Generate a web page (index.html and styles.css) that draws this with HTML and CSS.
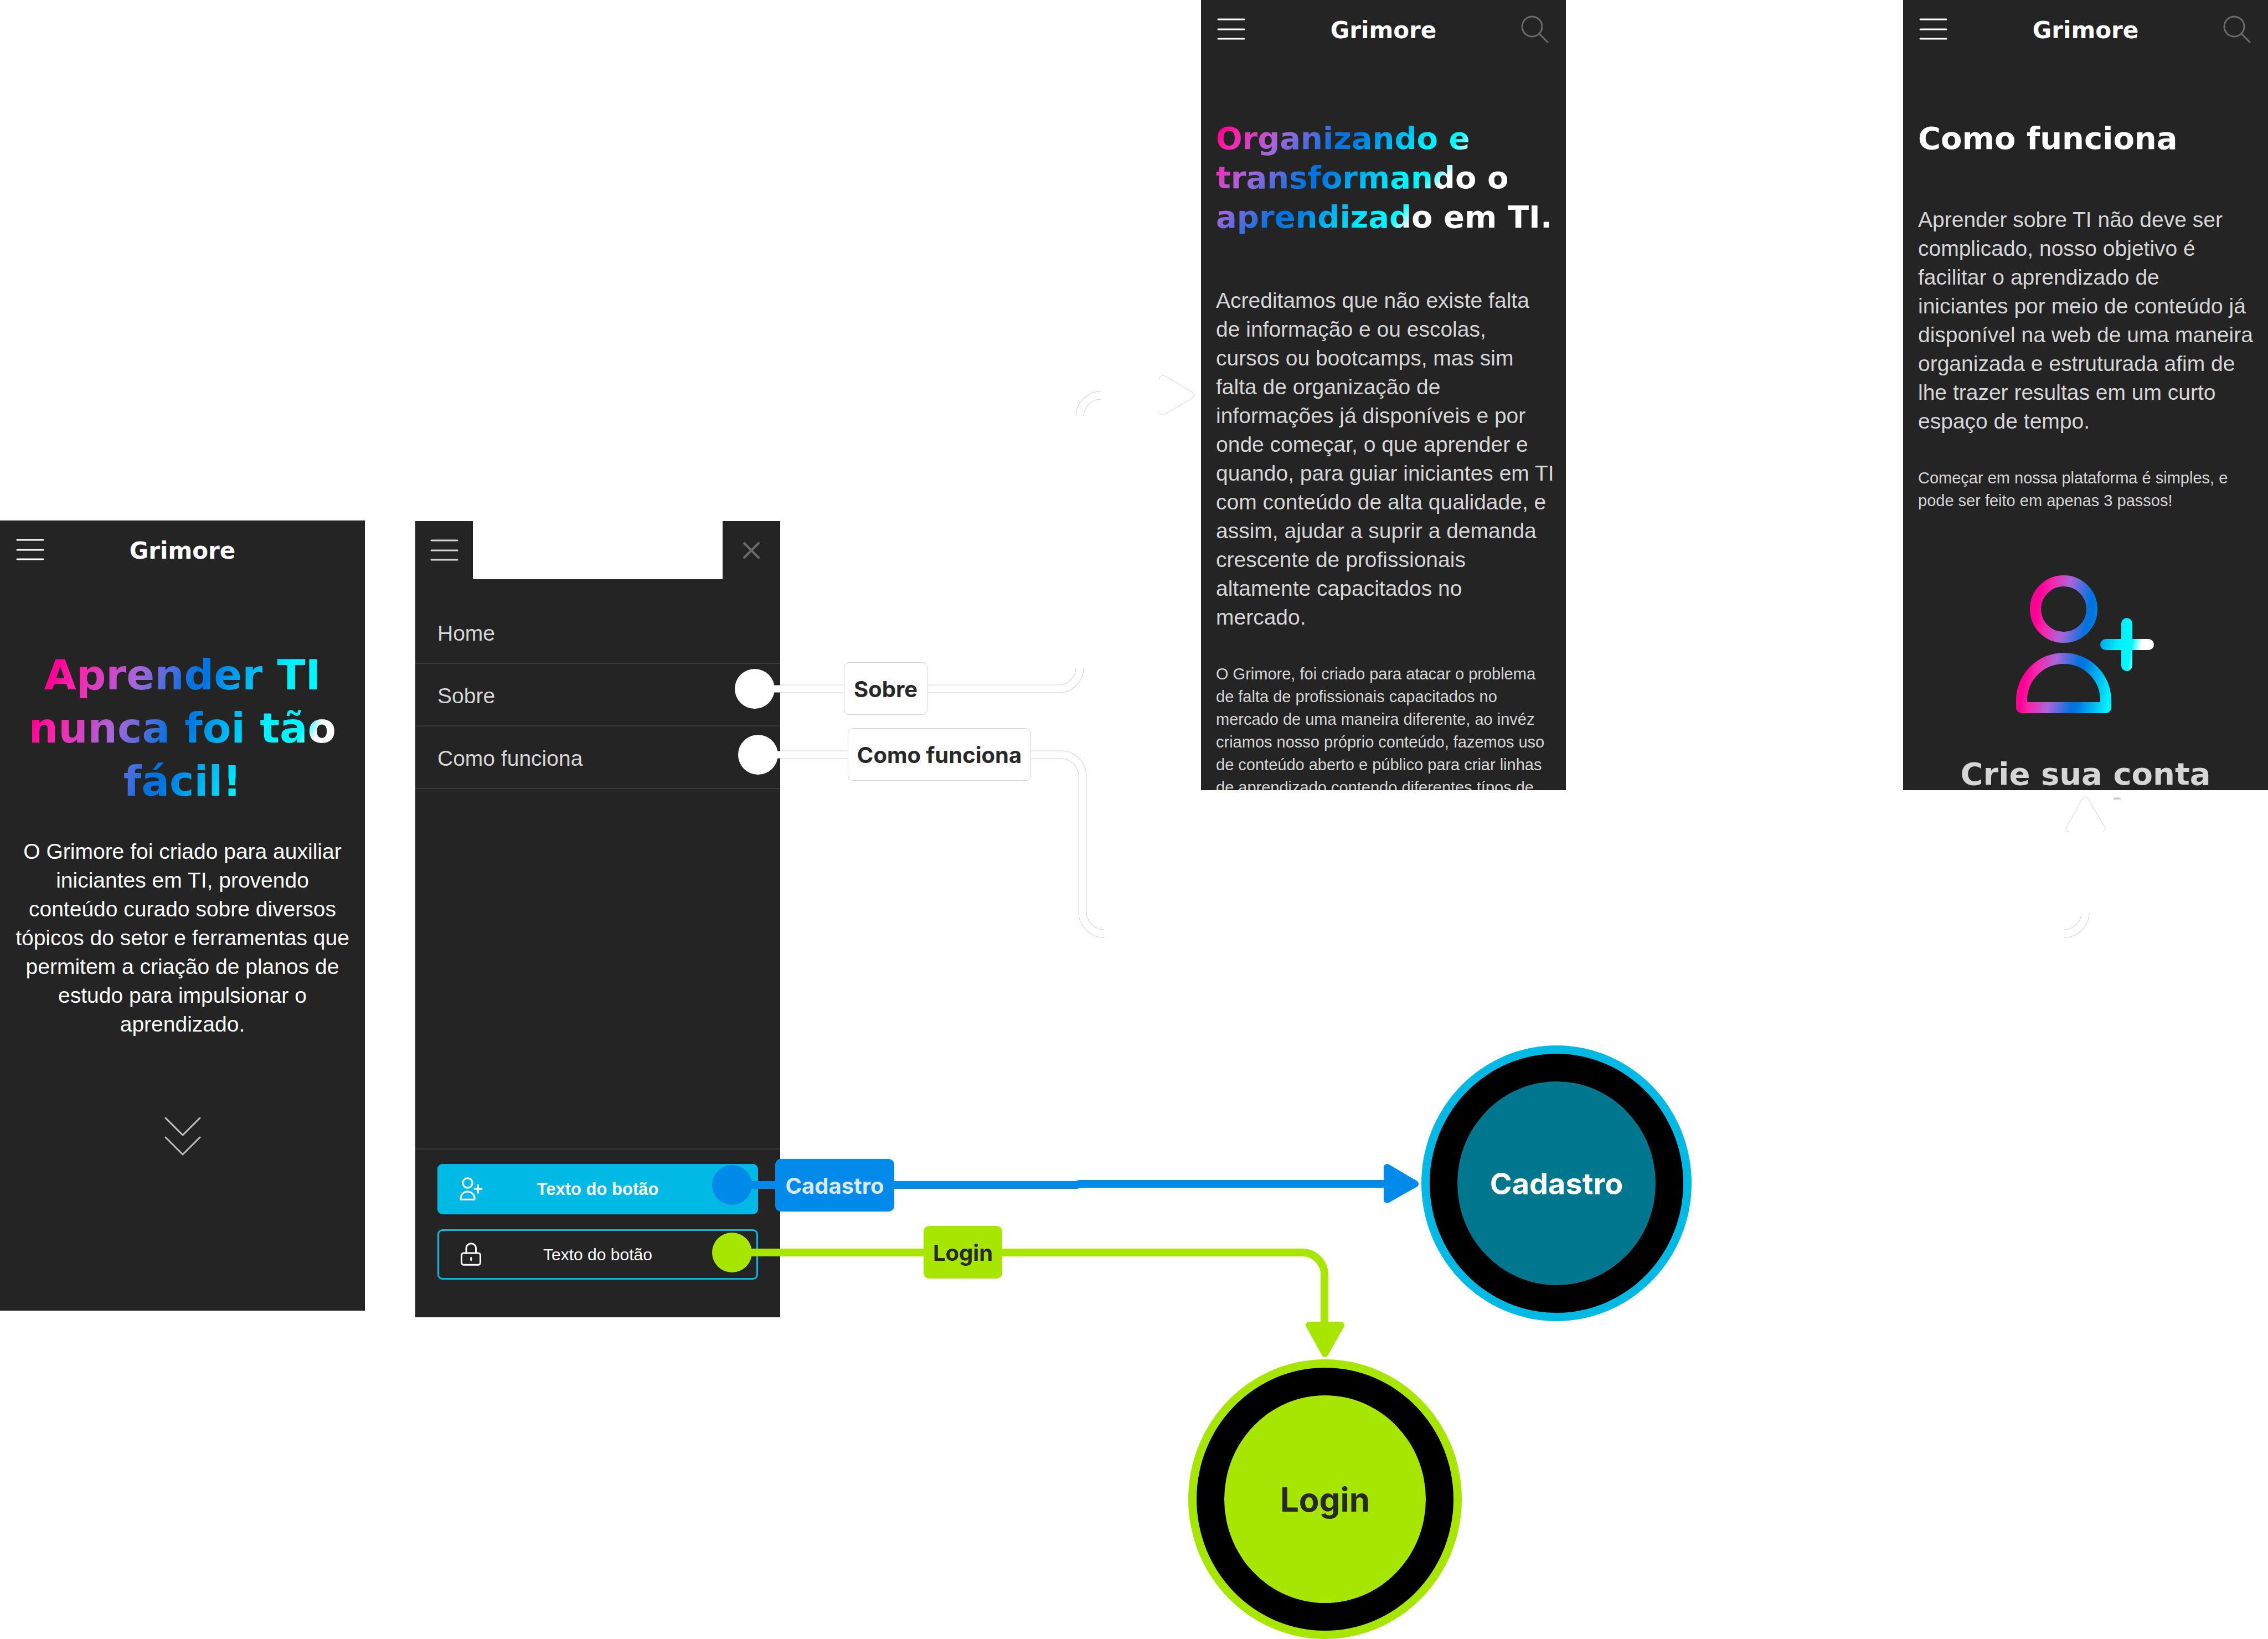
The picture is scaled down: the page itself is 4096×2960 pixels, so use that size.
FILE: index.html
```html
<!DOCTYPE html>
<html lang="pt-BR">
<head>
<meta charset="utf-8">
<meta name="viewport" content="width=device-width, initial-scale=1">
<title>Grimore - Fluxo mobile</title>
<link rel="stylesheet" href="styles.css">
</head>
<body>
<main class="canvas">

  <section class="phone phone-home">
    <header class="bar">
      <button class="icon-button" type="button" aria-label="Abrir menu">
        <svg class="icon-menu" viewBox="0 0 51 39"><path d="M2 2H49M2 20H49M2 37H49"/></svg>
      </button>
      <span class="brand">Grimore</span>
      <span class="bar-spacer"></span>
    </header>
    <div class="hero">
      <h1 class="hero-title">Aprender TI<br>nunca foi tão<br>fácil!</h1>
      <p class="text hero-text">O Grimore foi criado para auxiliar<br>iniciantes em TI, provendo<br>conteúdo curado sobre diversos<br>tópicos do setor e ferramentas que<br>permitem a criação de planos de<br>estudo para impulsionar o<br>aprendizado.</p>
      <svg class="icon-scroll" viewBox="0 0 66 70"><path d="M2 2L33 33L64 2M2 37L33 68L64 37"/></svg>
    </div>
  </section>

  <section class="phone-menu">
    <header class="menu-bar">
      <button class="menu-tab" type="button" aria-label="Menu">
        <svg class="icon-menu" viewBox="0 0 51 39"><path d="M2 2H49M2 20H49M2 37H49"/></svg>
      </button>
      <button class="menu-tab menu-tab-close" type="button" aria-label="Fechar menu">
        <svg class="icon-close" viewBox="0 0 32 32"><path d="M3 3L29 29M29 3L3 29"/></svg>
      </button>
    </header>
    <div class="menu-body">
      <nav class="menu-list">
        <a class="menu-link" href="#home">Home</a>
        <a class="menu-link" href="#sobre">Sobre</a>
        <a class="menu-link" href="#como-funciona">Como funciona</a>
      </nav>
      <div class="menu-actions">
        <button class="action action-primary" type="button">
          <svg class="action-icon" viewBox="0 0 42 42"><circle cx="14.500" cy="10.500" r="8.700"/><path d="M2 40.200V38.500A12.500 12.500 0 0 1 27 38.500V40.200ZM27 21.300H40M33.500 14.500V28"/></svg>
          Texto do botão
        </button>
        <button class="action" type="button">
          <svg class="action-icon" viewBox="0 0 42 42"><rect x="3.500" y="19" width="34" height="21.300" rx="4"/><path d="M12 19V10.500A8.700 8.700 0 0 1 29.500 10.500V19M20.700 27.500V31.500"/></svg>
          Texto do botão
        </button>
      </div>
    </div>
  </section>

  <section class="phone phone-about" id="sobre">
    <header class="bar">
      <button class="icon-button" type="button" aria-label="Abrir menu">
        <svg class="icon-menu" viewBox="0 0 51 39"><path d="M2 2H49M2 20H49M2 37H49"/></svg>
      </button>
      <span class="brand">Grimore</span>
      <button class="icon-button" type="button" aria-label="Buscar">
        <svg class="icon-search" viewBox="0 0 50 50"><circle cx="20" cy="20" r="18"/><path d="M33 33L48 48"/></svg>
      </button>
    </header>
    <article class="page">
      <h2 class="title title-gradient">Organizando e<br>transformando o<br>aprendizado em TI.</h2>
      <p class="text about-text">Acreditamos que não existe falta<br>de informação e ou escolas,<br>cursos ou bootcamps, mas sim<br>falta de organização de<br>informações já disponíveis e por<br>onde começar, o que aprender e<br>quando, para guiar iniciantes em TI<br>com conteúdo de alta qualidade, e<br>assim, ajudar a suprir a demanda<br>crescente de profissionais<br>altamente capacitados no<br>mercado.</p>
      <p class="text-small">O Grimore, foi criado para atacar o problema<br>de falta de profissionais capacitados no<br>mercado de uma maneira diferente, ao invéz<br>criamos nosso próprio conteúdo, fazemos uso<br>de conteúdo aberto e público para criar linhas<br>de aprendizado contendo diferentes típos de</p>
    </article>
  </section>

  <section class="phone phone-how" id="como-funciona">
    <header class="bar">
      <button class="icon-button" type="button" aria-label="Abrir menu">
        <svg class="icon-menu" viewBox="0 0 51 39"><path d="M2 2H49M2 20H49M2 37H49"/></svg>
      </button>
      <span class="brand">Grimore</span>
      <button class="icon-button" type="button" aria-label="Buscar">
        <svg class="icon-search" viewBox="0 0 50 50"><circle cx="20" cy="20" r="18"/><path d="M33 33L48 48"/></svg>
      </button>
    </header>
    <article class="page">
      <h2 class="title">Como funciona</h2>
      <p class="text how-text">Aprender sobre TI não deve ser<br>complicado, nosso objetivo é<br>facilitar o aprendizado de<br>iniciantes por meio de conteúdo já<br>disponível na web de uma maneira<br>organizada e estruturada afim de<br>lhe trazer resultas em um curto<br>espaço de tempo.</p>
      <p class="text-small">Começar em nossa plataforma é simples, e<br>pode ser feito em apenas 3 passos!</p>
      <svg class="icon-signup" viewBox="0 0 250 250">
        <defs>
          <linearGradient id="rainbow" gradientUnits="userSpaceOnUse" x1="0" y1="0" x2="295" y2="54">
            <stop offset="0.16" stop-color="#ff0095"/>
            <stop offset="0.21" stop-color="#ff1fa7"/>
            <stop offset="0.33" stop-color="#a866da"/>
            <stop offset="0.47" stop-color="#0073df"/>
            <stop offset="0.50" stop-color="#0076e0"/>
            <stop offset="0.68" stop-color="#00f0ff"/>
            <stop offset="0.76" stop-color="#00f8ff"/>
            <stop offset="0.82" stop-color="#fff"/>
          </linearGradient>
        </defs>
        <circle cx="86" cy="61" r="51"/>
        <path d="M10 239V226A76 76 0 0 1 162 226V239Z"/>
        <path d="M162 125H239M200 87V163"/>
      </svg>
      <h3 class="title step-title">Crie sua conta</h3>
    </article>
  </section>

  <svg class="wires" aria-hidden="true">
    <g class="wire-edge">
      <path d="M1409 1244H1912A38 38 0 0 0 1950 1206"/>
      <path d="M1950 752A38 38 0 0 1 1988 714"/>
      <path d="M1409 1363H1916A39 39 0 0 1 1955 1402V1647A39 39 0 0 0 1994 1686"/>
      <path d="M3766 1648A38 38 0 0 1 3728 1686"/>
    </g>
    <g class="wire-white">
      <path d="M1390 1244H1912A38 38 0 0 0 1950 1206V1204"/>
      <path d="M1950 754V752A38 38 0 0 1 1988 714H1990"/>
      <path d="M1390 1363H1916A39 39 0 0 1 1955 1402V1647A39 39 0 0 0 1994 1686H1996"/>
      <path d="M3766 1646V1648A38 38 0 0 1 3728 1686H3726"/>
    </g>
    <circle class="dot-white" cx="1363" cy="1244" r="36"/>
    <circle class="dot-white" cx="1369" cy="1363" r="36"/>
    <path class="tip-outline" d="M2094 684C2094 679 2100 677 2104 679L2153 708Q2160 713 2153 719L2104 748C2100 751 2094 748 2094 743"/>
    <path class="tip-outline" d="M3736 1502C3731 1501 3730 1497 3732 1494L3761 1442Q3766 1436 3771 1442L3801 1494C3803 1497 3801 1501 3797 1502"/>
    <path class="sliver" d="M3817 1444V1441Q3823 1439 3830 1441V1444Z"/>
    <g class="wire wire-blue">
      <path d="M1350 2140H1945L1949 2138H2505"/>
      <path class="tip" d="M2505 2108V2167L2556 2138Z"/>
    </g>
    <circle class="dot-blue" cx="1322" cy="2140" r="36"/>
    <g class="wire wire-green">
      <path d="M1350 2262H2352A40 40 0 0 1 2392 2302V2396"/>
      <path class="tip" d="M2364 2393H2422L2393 2445Z"/>
    </g>
    <circle class="dot-green" cx="1322" cy="2262" r="36"/>
  </svg>

  <div class="tag tag-sobre">Sobre</div>
  <div class="tag tag-como">Como funciona</div>
  <div class="tag tag-cadastro">Cadastro</div>
  <div class="tag tag-login">Login</div>

  <div class="node node-cadastro"><span class="node-core">Cadastro</span></div>
  <div class="node node-login"><span class="node-core">Login</span></div>
</main>
</body>
</html>
```

FILE: styles.css
```css
* {
  box-sizing: border-box;
}

body {
  margin: 0;
  background: #fff;
  color: #d6d6d6;
  font-family: "Liberation Sans", Arial, sans-serif;
}

h1, h2, h3, p {
  margin: 0;
}

button {
  margin: 0;
  padding: 0;
  border: 0;
  background: none;
  color: inherit;
  font: inherit;
}

svg {
  display: block;
  fill: none;
  stroke: currentColor;
  stroke-linecap: round;
  stroke-linejoin: round;
}

.canvas {
  position: relative;
  width: 100%;
  min-height: 100vh;
  overflow: hidden;
}

/* Phone frames, placed freely on the canvas */
.phone {
  position: absolute;
  width: 659px;
  height: 1427px;
  overflow: hidden;
  background: #242424;
  white-space: nowrap;
}

.phone-home { left: 0; top: 940px; }
.phone-about { left: 2169px; top: 0; }
.phone-how { right: 0; top: 0; }

.bar {
  display: flex;
  align-items: center;
  justify-content: space-between;
  height: 105px;
  padding: 0 29px;
  color: #fff;
}

.icon-button,
.bar-spacer {
  width: 52px;
}

.brand {
  padding-top: 4px;
  font: 700 42px/56px "DejaVu Sans", sans-serif;
}

.icon-menu {
  width: 51px;
  height: 39px;
  stroke-width: 3;
}

.icon-search {
  width: 50px;
  height: 50px;
  color: #6b6b6b;
  stroke-width: 3;
}

.text {
  font-size: 39px;
  line-height: 52px;
}

.text-small {
  font-size: 29px;
  line-height: 41px;
}

/* Home */
.hero {
  display: flex;
  flex-direction: column;
  align-items: center;
  padding: 126px 27px 0;
  color: #fff;
  text-align: center;
}

.hero-title {
  align-self: stretch;
  font: 700 75px/96px "DejaVu Sans", sans-serif;
  background: linear-gradient(113deg, #ff0095 12%, #ff1fa7 17%, #a866da 33%, #0073df 48%, #0076e0 51%, #00f0ff 70%, #00f8ff 80%, #fff 84%);
  -webkit-background-clip: text;
  background-clip: text;
  color: transparent;
}

.hero-text {
  margin-top: 53px;
}

.icon-scroll {
  width: 66px;
  height: 70px;
  margin-top: 141px;
  color: #bfbfbf;
  stroke-width: 3;
}

/* Content pages */
.page {
  padding: 109px 27px 0;
}

.title {
  color: #fff;
  font: 700 56px/71px "DejaVu Sans", sans-serif;
}

.title-gradient {
  background: linear-gradient(129deg, #ff0095 3%, #ff1fa7 7%, #a866da 18%, #0073df 33%, #0076e0 36%, #00f0ff 54%, #00f8ff 60%, #fff 65%);
  -webkit-background-clip: text;
  background-clip: text;
  color: transparent;
}

.about-text { margin-top: 90px; }
.how-text { margin-top: 86px; }

.text + .text-small {
  margin-top: 56px;
}

.icon-signup {
  width: 250px;
  height: 250px;
  margin: 114px 0 73px 177px;
  stroke: url(#rainbow);
  stroke-width: 20;
}

.step-title {
  color: #d6d6d6;
  text-align: center;
}

/* Open menu */
.phone-menu {
  position: absolute;
  left: 750px;
  top: 941px;
  width: 659px;
}

.menu-bar {
  display: flex;
  justify-content: space-between;
}

.menu-tab {
  display: grid;
  place-items: center;
  width: 104px;
  height: 105px;
  background: #242424;
}

.menu-tab-close {
  color: #6b6b6b;
}

.icon-close {
  width: 32px;
  height: 32px;
  stroke-width: 4;
}

.menu-body {
  display: flex;
  flex-direction: column;
  justify-content: space-between;
  min-height: 1333px;
  padding-top: 40px;
  background: #242424;
}

.menu-link {
  display: block;
  padding: 4px 40px 0;
  border-bottom: 2px solid #3a3a3a;
  color: #d6d6d6;
  font-size: 39px;
  line-height: 107px;
  text-decoration: none;
}

.menu-actions {
  display: flex;
  flex-direction: column;
  gap: 27px;
  padding: 26px 40px 68px;
  border-top: 2px solid #3a3a3a;
}

.action {
  position: relative;
  height: 91px;
  border: 3px solid #00b9e5;
  border-radius: 9px;
  color: #fff;
  font-size: 30px;
  line-height: 36px;
}

.action-primary {
  background: #00b9e5;
  font-size: 31px;
  font-weight: 700;
}

.action-icon {
  position: absolute;
  left: 37px;
  top: 21px;
  width: 42px;
  height: 42px;
  stroke-width: 3;
}

/* Connectors */
.wires {
  position: absolute;
  left: 0;
  top: 0;
  width: 100%;
  height: 100%;
  stroke-linecap: butt;
  pointer-events: none;
}

.wire-edge { stroke: #d4d4d4; stroke-width: 15; }
.wire-white { stroke: #fff; stroke-width: 13; }
.wire { stroke-width: 14; }
.wire-blue { stroke: #008aea; }
.wire-green { stroke: #a6e600; }
.wire-blue .tip { fill: #008aea; stroke-width: 12; }
.wire-green .tip { fill: #a6e600; stroke-width: 12; }
.tip-outline { stroke: #d4d4d4; stroke-width: 1; }
.sliver { fill: #ccc; stroke: none; }
.dot-white { fill: #fff; stroke: none; }
.dot-blue { fill: #008aea; stroke: none; }
.dot-green { fill: #a6e600; stroke: none; }

.tag {
  position: absolute;
  height: 95px;
  border-radius: 10px;
  color: #282828;
  font: 700 40px/97px Inter, sans-serif;
  text-align: center;
  white-space: nowrap;
}

.tag-sobre,
.tag-como {
  border: 1px solid #d4d4d4;
  background: #fff;
  line-height: 95px;
}

.tag-sobre { left: 1524px; top: 1196px; width: 151px; }
.tag-como { left: 1531px; top: 1315px; width: 331px; }

.tag-cadastro {
  left: 1400px;
  top: 2093px;
  width: 215px;
  background: #008aea;
  color: #d9e8fc;
}

.tag-login {
  left: 1668px;
  top: 2214px;
  width: 142px;
  background: #a6e600;
}

.node {
  position: absolute;
  display: flex;
  padding: 50px;
  border: 15px solid;
  border-radius: 50%;
  background: #000;
  font-family: Inter, sans-serif;
  font-weight: 700;
}

.node-core {
  display: grid;
  flex: 1;
  place-items: center;
  border-radius: 50%;
}

.node-cadastro {
  left: 2567px;
  top: 1888px;
  width: 488px;
  height: 498px;
  border-color: #00b9e5;
}

.node-cadastro .node-core {
  background: #00768f;
  color: #fff;
  font-size: 54px;
}

.node-login {
  left: 2146px;
  top: 2455px;
  width: 494px;
  height: 505px;
  border-color: #a6e600;
}

.node-login .node-core {
  background: #a6e600;
  color: #282828;
  font-size: 60px;
}
```
